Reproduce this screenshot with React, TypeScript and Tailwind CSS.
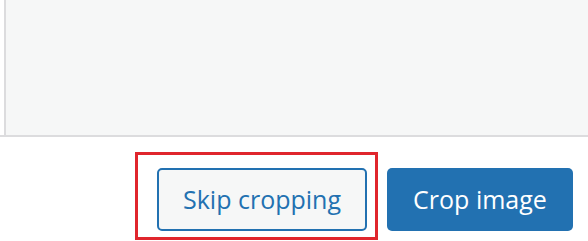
export default function App() {
  return (
    <div className="relative w-[588px] h-[241px] bg-white overflow-hidden" style={{ fontFamily: '"Open Sans", "Noto Sans", sans-serif' }}>
      {/* Crop canvas area */}
      <div className="h-[137px] pl-1 border-b-2 border-[#dcdcde]">
        <div className="h-full bg-[#f6f7f7] border-l-2 border-[#dcdcde]" />
      </div>

      {/* Footer toolbar */}
      <div className="flex justify-end gap-5 pt-[31px] pr-[15px]">
        <button className="w-[210px] h-[63px] rounded-[5px] border-2 border-[#2271b1] bg-[#f6f7f7] text-[#2271b1] text-[25px] leading-none">
          Skip cropping
        </button>
        <button className="w-[186px] h-[63px] rounded-[5px] bg-[#2271b1] text-white text-[25px] leading-none">
          Crop image
        </button>
      </div>

      {/* Annotation highlight */}
      <div className="absolute left-[135px] top-[152px] w-[243px] h-[88px] border-[3px] border-[#e0262d] pointer-events-none" />
    </div>
  );
}
